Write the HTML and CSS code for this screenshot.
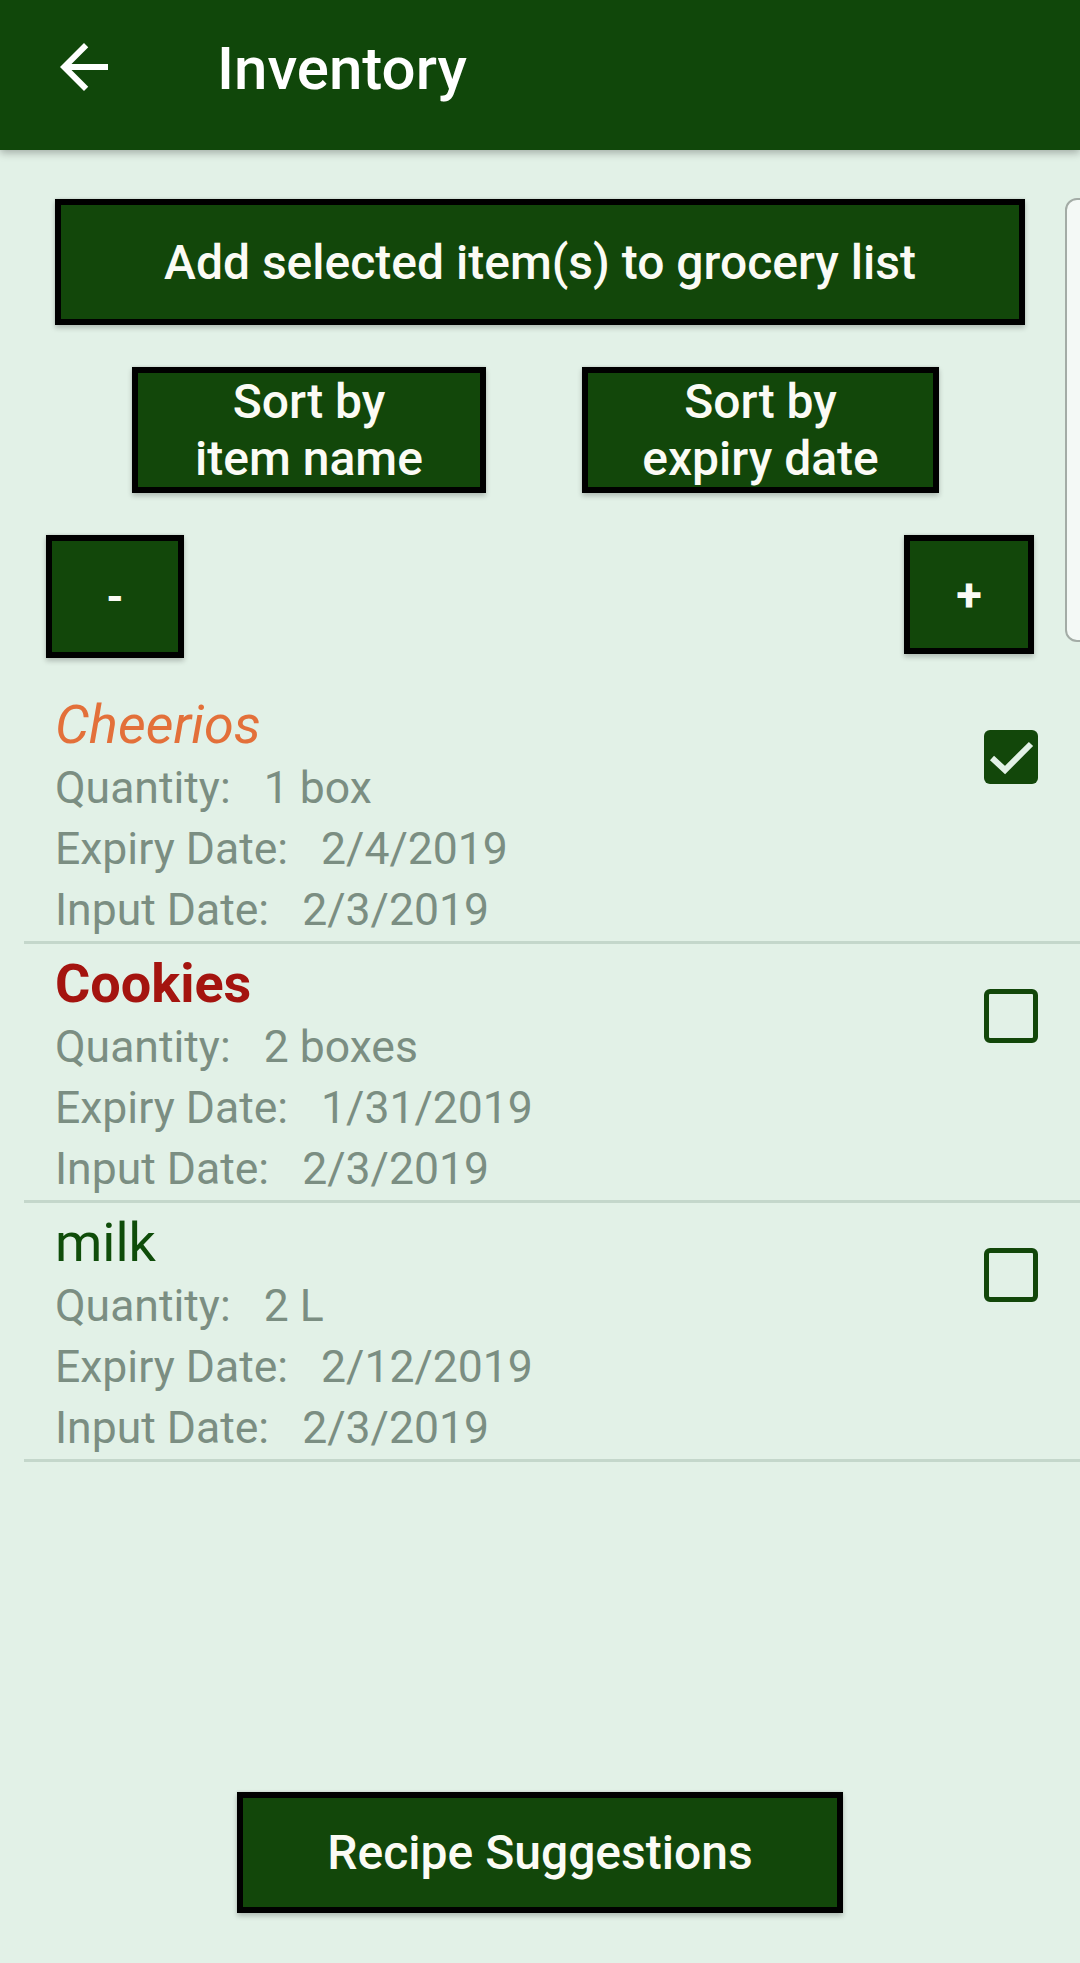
FILE: index.html
```html
<!DOCTYPE html>
<html>
<head>
<meta charset="utf-8">
<link rel="stylesheet" href="styles.css">
</head>
<body>
<header class="appbar">
  <svg class="back" viewBox="0 0 24 24" width="72" height="72"><path fill="#ffffff" d="M20 11H7.83l5.59-5.59L12 4l-8 8 8 8 1.41-1.41L7.83 13H20v-2z"/></svg>
  <div class="title">Inventory</div>
</header>
<main class="content">
  <div class="btn add">Add selected item(s) to grocery list</div>
  <div class="sort-row">
    <div class="btn sort sort-name">Sort by<br>item name</div>
    <div class="btn sort sort-date">Sort by<br>expiry date</div>
  </div>
  <div class="step-row">
    <div class="btn minus">-</div>
    <div class="btn plus">+</div>
  </div>
  <div class="list">
    <div class="item">
      <div class="info">
        <div class="name cheerios">Cheerios</div>
        <div class="line">Quantity:<span class="val">1 box</span></div>
        <div class="line">Expiry Date:<span class="val">2/4/2019</span></div>
        <div class="line">Input Date:<span class="val">2/3/2019</span></div>
      </div>
      <div class="check checked"><svg viewBox="0 0 54 54" width="54" height="54"><path d="M8 28 L21 40 L47 14" fill="none" stroke="#e2f1e7" stroke-width="6"/></svg></div>
    </div>
    <div class="item">
      <div class="info">
        <div class="name cookies">Cookies</div>
        <div class="line">Quantity:<span class="val">2 boxes</span></div>
        <div class="line">Expiry Date:<span class="val">1/31/2019</span></div>
        <div class="line">Input Date:<span class="val">2/3/2019</span></div>
      </div>
      <div class="check"></div>
    </div>
    <div class="item">
      <div class="info">
        <div class="name milk">milk</div>
        <div class="line">Quantity:<span class="val">2 L</span></div>
        <div class="line">Expiry Date:<span class="val">2/12/2019</span></div>
        <div class="line">Input Date:<span class="val">2/3/2019</span></div>
      </div>
      <div class="check"></div>
    </div>
  </div>
</main>
<footer class="footer">
  <div class="btn recipe">Recipe Suggestions</div>
</footer>
<div class="edge-card"></div>
</body>
</html>
```

FILE: styles.css
```css
* { box-sizing: border-box; }
html, body { margin: 0; padding: 0; }
body {
  width: 1080px;
  height: 1963px;
  background: #e2f1e7;
  font-family: Roboto, "Noto Sans", "Liberation Sans", sans-serif;
  display: flex;
  flex-direction: column;
  overflow: hidden;
  position: relative;
}
.appbar {
  height: 150px;
  flex: none;
  background: #10470a;
  display: flex;
  align-items: center;
  padding-bottom: 16px;
  box-shadow: 0 3px 8px rgba(0,0,0,0.28);
  position: relative;
  z-index: 2;
}
.back { margin-left: 48px; flex: none; }
.title {
  margin-left: 97px;
  color: #ffffff;
  font-weight: 500;
  font-size: 60px;
  line-height: 60px;
  padding-top: 3px;
}
.content {
  padding-top: 49px;
  display: flex;
  flex-direction: column;
}
.btn {
  background: #12470a;
  border: 6px solid #000;
  color: #fbfbf5;
  font-weight: 500;
  font-size: 48px;
  display: flex;
  align-items: center;
  justify-content: center;
  box-shadow: 0 3px 5px rgba(0,0,0,0.22), 0 -1px 2px rgba(0,0,0,0.08);
}
.add {
  margin: 0 55px;
  height: 126px;
}
.sort-row {
  margin-top: 42px;
  display: flex;
  padding-left: 132px;
  gap: 96px;
}
.sort {
  height: 126px;
  line-height: 57px;
  text-align: center;
  display: block;
}
.sort-name { width: 354px; }
.sort-date { width: 357px; }
.step-row {
  margin-top: 42px;
  display: flex;
  justify-content: space-between;
  align-items: flex-start;
  padding: 0 46px;
}
.minus { width: 138px; height: 123px; font-weight: 700; font-size: 44px; }
.plus { width: 130px; height: 119px; font-weight: 700; font-size: 47px; }
.list {
  margin-top: 27px;
  margin-left: 24px;
}
.item {
  display: flex;
  justify-content: space-between;
  align-items: flex-start;
  border-bottom: 3px solid #c4d7cb;
  padding: 7px 0 0 31px;
}
.name {
  font-size: 54px;
  line-height: 66px;
}
.cheerios { color: #e3703a; font-style: italic; }
.cookies { color: #a4140f; font-weight: 700; }
.milk { color: #0f4d0a; }
.line {
  font-size: 44.5px;
  line-height: 61px;
  color: #7b8e82;
}
.val { margin-left: 33px; }
.check {
  width: 54px;
  height: 54px;
  margin-top: 38px;
  margin-right: 42px;
  border: 5px solid #12470a;
  border-radius: 6px;
  flex: none;
}
.check.checked {
  background: #12470a;
  border: none;
}
.check svg { display: block; }
.footer {
  margin-top: auto;
  display: flex;
  justify-content: center;
  padding-bottom: 50px;
}
.recipe {
  width: 606px;
  height: 121px;
}
.edge-card {
  position: absolute;
  top: 198px;
  left: 1065px;
  width: 40px;
  height: 444px;
  border: 2px solid #a3aca6;
  border-radius: 12px;
  background: #f4f9f6;
}
```
